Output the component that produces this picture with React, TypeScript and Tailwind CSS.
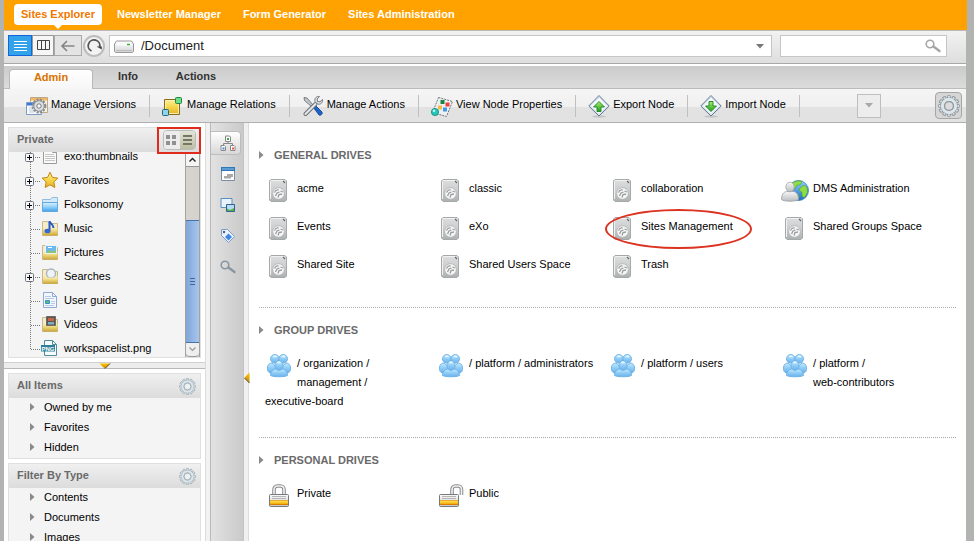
import React from "react";

type Kids = { children: React.ReactNode };

/* Shared gradients used by the icon drawings */
function Gradients() {
  const g = (id: string, stops: string[]) => (
    <linearGradient id={id} x1="0" y1="0" x2="0" y2="1">
      {stops.map((c, i) => (
        <stop key={i} offset={i / (stops.length - 1)} stopColor={c} />
      ))}
    </linearGradient>
  );
  return (
    <svg className="absolute h-0 w-0" aria-hidden="true">
      <defs>
        {g("steel", ["#dedfdf", "#cbcdce", "#adb0b1"])}
        {g("blue", ["#c4ecff", "#8fccf7", "#6ab2ec"])}
        {g("folder", ["#dff0ff", "#8fd0f8", "#3f9fe8"])}
        {g("gold", ["#fff2a0", "#f6d64a", "#e3b02a"])}
        {g("sand", ["#f8eebb", "#e8cf6c", "#caa53c"])}
        {g("white", ["#ffffff", "#d2d4d6"])}
        {g("person", ["#f7f7f7", "#b9bcbf"])}
        {g("globe", ["#8fd0ff", "#1b6fc4"])}
        {g("green", ["#a5f06a", "#1f9e1f"])}
        {g("lockBody", ["#fafafa", "#c9c9c9"])}
        {g("lockGold", ["#ffe14a", "#f0a000"])}
        {g("orange", ["#ffc400", "#c88a00"])}
      </defs>
    </svg>
  );
}

function Icon({ w, h, top = 0, children }: Kids & { w: number; h: number; top?: number }) {
  return (
    <svg width={w} height={h} viewBox={`0 ${top} ${w} ${h}`} fill="none" className="block shrink-0 overflow-visible" aria-hidden="true">
      {children}
    </svg>
  );
}

/* ---------- toolbar icons, 22 x 24 ---------- */

const gearTeeth = (
  <>
    <circle cx="13" cy="12" r="6.200" stroke="#8b8f93" strokeWidth="2.500" strokeDasharray="2.200 1.050" />
    <circle cx="13" cy="12" r="5.200" fill="#dcdfe1" stroke="#94989c" />
    <circle cx="13" cy="12" r="2.200" fill="#f8f8f8" stroke="#777b80" />
  </>
);

const VersionsIcon = () => (
  <Icon w={22} h={24}>
    <path d="M4.500 3.500h17v15h-17z" fill="#fdf6e2" stroke="#b9a98a" />
    <path d="M5 4h16v2.500H5z" fill="#f9b65c" />
    <path d="M.5 8.500h15v12H.5z" fill="#f6f9fd" stroke="#7f9cc4" />
    <path d="M1 9h14v2.500H1z" fill="#3d78dc" />
    <path d="M3 14h4M3 16h4M3 18h5" stroke="#c5ccd6" />
    {gearTeeth}
  </Icon>
);

const RelationsIcon = () => (
  <Icon w={22} h={24}>
    <path d="M2.500 5.500h15v15h-15z" fill="url(#gold)" stroke="#8b6b1b" />
    <path d="M3.500 6.500h13v13h-13z" stroke="#fbeeb0" />
    <rect x="13.500" y="3.500" width="6" height="6" rx="1" fill="#6fdc8c" stroke="#23863e" />
    <rect x=".5" y="15.500" width="6" height="6" rx="1" fill="#8fd3ea" stroke="#1f6684" />
  </Icon>
);

const ActionsIcon = () => (
  <Icon w={22} h={24}>
    <path d="M2 3.500l3 .5 6 7-1.500 1.500-7-6z" fill="#c4c8cc" stroke="#5c6268" strokeWidth=".8" />
    <path d="M11 13l2-2 7 7c1 1.500-1 4-3 3z" fill="#1e62c8" stroke="#0c3f8e" strokeWidth=".8" />
    <path d="M3.500 20l10-10" stroke="#676d73" strokeWidth="4" strokeLinecap="round" />
    <path d="M3.500 20l10-10" stroke="#e4e7ea" strokeWidth="2.200" strokeLinecap="round" />
    <path d="M17.500 2.500c-3-.5-5.500 2-4.500 5l2.500 2.500c3 1 5.500-1.500 5-4.500l-2.500 2.300-2.500-.3-.3-2.500z" fill="#dfe2e5" stroke="#676d73" strokeWidth=".9" />
  </Icon>
);

const PropertiesIcon = () => (
  <Icon w={22} h={24}>
    <path d="M7.500 3.500l14 4-6 15-14-4z" fill="#eff0f2" stroke="#6d747b" strokeDasharray="2 1" />
    <path d="M9.500 6h4v4h-4z" fill="#15873c" />
    <path d="M14.500 8.500h4v4h-4z" fill="#ee4040" />
    <path d="M7 11.500h4v4H7z" fill="#f6b94c" />
    <path d="M12 13.500h4v4h-4z" fill="#3c9bea" />
    <circle cx="4" cy="18" r="3.600" fill="#27c7bb" stroke="#0c837d" strokeWidth=".8" />
    <circle cx="3" cy="16.800" r="1.200" fill="#c7fbf5" />
  </Icon>
);

function TransferIcon({ down }: { down?: boolean }) {
  return (
    <Icon w={22} h={24}>
      <ellipse cx="11" cy="22.500" rx="7" ry="1.200" fill="#c4c4c4" />
      <path d="M11 1.500L21.200 12 11 22 .8 12z" fill="#f7fafc" stroke="#5e7795" />
      <path d="M11 3L19.700 12 11 20.500 2.300 12z" stroke="#c7d5e4" />
      {down ? (
        <path d="M9 7.500h4V12h3.500L11 17.500 5.500 12H9z" fill="url(#green)" stroke="#2a8a2a" />
      ) : (
        <path d="M9 17.500h4V13h3.500L11 7.500 5.500 13H9z" fill="url(#green)" stroke="#2a8a2a" />
      )}
    </Icon>
  );
}

const gearSpokes = Array.from({ length: 12 }, (_, i) => i * 30);

function GearIcon({ size, dark }: { size: number; dark?: boolean }) {
  const edge = dark ? "#8d979d" : "#9dacb6";
  return (
    <svg width={size} height={size} viewBox="0 0 20 20" fill="none" aria-hidden="true" className="block">
      {gearSpokes.map((a) => (
        <rect key={a} x="8.600" y=".5" width="2.800" height="4" rx=".8" fill="#d8e0e4" stroke={edge} strokeWidth=".9" transform={`rotate(${a} 10 10)`} />
      ))}
      <circle cx="10" cy="10" r="6" stroke={edge} strokeWidth="3.600" />
      <circle cx="10" cy="10" r="6" stroke="#dbe5ea" strokeWidth="2.800" />
      <circle cx="10" cy="10" r="4" fill={dark ? "#dcdcdc" : "#eef1f2"} stroke={edge} strokeWidth="1.100" />
    </svg>
  );
}

const Magnifier = ({ color }: { color: string }) => (
  <Icon w={16} h={14}>
    <circle cx="5" cy="5" r="3.800" stroke={color} strokeWidth="1.600" />
    <path d="M8.500 7.500l6 4.500" stroke={color} strokeWidth="2.400" strokeLinecap="round" />
  </Icon>
);

const Caret = ({ color }: { color: string }) => (
  <Icon w={8} h={5}>
    <path d="M0 0h8L4 4.500z" fill={color} />
  </Icon>
);

const RightMark = () => (
  <Icon w={5} h={8}>
    <path d="M0 0l4.500 4L0 8z" fill="#8a8a8a" />
  </Icon>
);

/* ---------- drive icons, 28 x 24 ---------- */

const DriveIcon = () => (
  <Icon w={28} h={24} top={1}>
    <path d="M6 1.500h14l1.500 1.500v19L20 23.500H6L4.500 22V3z" fill="url(#steel)" stroke="#a6a9aa" />
    <path d="M5.500 21V3.500L6.500 2.500h12" stroke="#f1f1f1" />
    <path d="M18 3l2 2" stroke="#666" strokeWidth="1.100" />
    <circle cx="13.500" cy="15.500" r="5.800" fill="#f6f6f6" stroke="#b0b2b3" strokeWidth=".8" />
    <path d="M9.500 14.500c1-2 3-2.800 4.200-2.300M10.500 18l1.500-3 2.500-1M13 19.500l1-3 3-.5M15.500 13l2.500 1" stroke="#9a9d9e" strokeWidth="1.300" />
  </Icon>
);

const GroupIcon = () => (
  <Icon w={28} h={24} top={1}>
    <g fill="url(#blue)" stroke="#6aafe4" strokeWidth=".9">
      <path d="M2.500 16.500c-.5-4 1.500-6.500 4.500-6.500l4.500 4-4 6c-3 0-4.500-.5-5-3.500zM25.500 16.500c.5-4-1.500-6.500-4.500-6.500l-4.500 4 4 6c3 0 4.500-.5 5-3.500z" />
      <circle cx="9.800" cy="5.800" r="4.300" />
      <circle cx="18.200" cy="5.800" r="4.300" />
      <path d="M5.500 22.500c0-3.500 2-6 5-6.500h7c3 .5 5 3 5 6.500-3 1.700-14 1.700-17 0z" />
      <ellipse cx="14" cy="12.500" rx="4" ry="4.800" />
    </g>
    <path d="M8.500 4c1-1 2-1 3 0M17 4c1-1 2-1 3 0M12.500 10c1-1 2-1 3 0" stroke="#e9f8ff" strokeWidth="1.200" />
  </Icon>
);

const AdminIcon = () => (
  <Icon w={28} h={24} top={1}>
    <circle cx="17.500" cy="12.500" r="10" fill="url(#globe)" stroke="#3b7fb8" strokeWidth=".8" />
    <path d="M11 5.500c3-3 8-3 10-2l-1.500 3-4 1-1 3-3-1zM19 10l4-3 3 2.500.5 5-3 5-2.500-1v-4l-3-2.500zM13 15l4 1 1 3-2 3-3-1z" fill="#8fdc45" stroke="#4b9e2a" strokeWidth=".6" />
    <path d="M.5 21.500c0-5 2-7.500 5-8h7c3 .5 5 3 5 8-2 2.300-15 2.300-17 0z" fill="url(#person)" stroke="#9b9ea1" strokeWidth=".8" />
    <ellipse cx="9" cy="9" rx="4.200" ry="4.800" fill="url(#person)" stroke="#a4a7aa" strokeWidth=".8" />
  </Icon>
);

function LockIcon({ open }: { open?: boolean }) {
  const shackle = open
    ? "M15 12V6.500C15 4.500 16.500 3 18.500 3H21c2 0 3.500 1.500 3.500 3.500V12"
    : "M9 12V6.500C9 4.500 10.500 3 12.500 3h3C17.500 3 19 4.500 19 6.500V12";
  return (
    <Icon w={28} h={24} top={1}>
      <path d={shackle} stroke="#8a8c8f" strokeWidth="3.600" />
      <path d={shackle} stroke="#f0f0f0" strokeWidth="1.600" />
      <g transform={open ? "translate(-2 0)" : undefined}>
        <rect x="4.500" y="11.500" width="19" height="12" rx="1" fill="url(#lockBody)" stroke="#77797c" />
        <path d="M7 13.500h14M7 15.500h14" stroke="#b5b5b5" />
        <path d="M5 18h18v3.500H5z" fill="url(#lockGold)" />
        <path d="M5 21.500h18" stroke="#d97d00" />
        <path d="M5 17.500h18" stroke="#e8a93a" />
      </g>
    </Icon>
  );
}

/* ---------- tree icons, 18 x 18 ---------- */

const PageIcon = () => (
  <Icon w={18} h={18}>
    <path d="M2.500 1.500h9l4 4v11h-13z" fill="#fafafa" stroke="#9b9b9b" />
    <path d="M11.500 1.500v4h4" stroke="#9b9b9b" />
    <path d="M4 7.500h9M4 9.500h10M4 11.500h10M4 13.500h10" stroke="#c6c6c6" />
  </Icon>
);
const StarIcon = () => (
  <Icon w={18} h={18}>
    <path d="M9 1.200l2.400 5.200 5.400.7-4 3.800 1 5.600L9 13.800l-4.800 2.700 1-5.600-4-3.800 5.400-.7z" fill="url(#gold)" stroke="#c4860c" />
  </Icon>
);
const FolderIcon = () => (
  <Icon w={18} h={18}>
    <path d="M1.500 15.500V4.500h8l1.500-2h5.500v13z" fill="#d3eafa" stroke="#8fbcdf" />
    <path d="M1.500 7.500h15v9h-15z" fill="url(#folder)" stroke="#5fa8e0" />
  </Icon>
);
function MediaFolder({ children }: Kids) {
  return (
    <Icon w={18} h={18}>
      <path d="M1.500 2.500h5l1.500 2h8.500v12h-15z" fill="#f4ecc8" stroke="#c8b987" />
      <path d="M2 9h14.500v7.500H2z" fill="url(#sand)" />
      {children}
    </Icon>
  );
}
const MusicIcon = () => (
  <MediaFolder>
    <path d="M8.500 2v9.500M8.500 2.500c1 2 4 3 4 6.500" stroke="#2a58c8" strokeWidth="2" />
    <ellipse cx="6.500" cy="12" rx="3" ry="2.300" fill="#3567da" />
  </MediaFolder>
);
const PictureIcon = () => (
  <MediaFolder>
    <path d="M4.500 2.500h11v8h-11z" fill="#6cb9f2" stroke="#e8f4fb" />
    <path d="M5 10l3-3 3 1.500 4-1V10z" fill="#8fc36a" />
    <path d="M7 4.500h4" stroke="#fff" />
  </MediaFolder>
);
const SearchFolderIcon = () => (
  <MediaFolder>
    <circle cx="10" cy="6.500" r="4.500" fill="#eef3f8" stroke="#a7b1bd" strokeWidth="1.300" />
    <path d="M2 10.500h14.500v6H2z" fill="url(#sand)" />
  </MediaFolder>
);
const GuideIcon = () => (
  <Icon w={18} h={18}>
    <path d="M2.500 1.500h9l4 4v11h-13z" fill="#f2f7fd" stroke="#8fa9d2" />
    <path d="M11.500 1.500v4h4" stroke="#8fa9d2" />
    <path d="M4 5.500h6M4 7.500h9M10 10.500h4M10 12.500h4M4 14.500h9" stroke="#b5c9e8" />
    <path d="M4.500 9.500h4v3h-4z" fill="#58c46a" stroke="#3a8ed0" />
  </Icon>
);
const VideoIcon = () => (
  <MediaFolder>
    <path d="M5.500 1.500h9v9h-9z" fill="#5c564f" stroke="#6d6963" />
    <path d="M7 3h6v3H7z" fill="#c8624a" />
    <path d="M7 7h6v2.500H7z" fill="#7faec4" />
  </MediaFolder>
);
const PngIcon = () => (
  <Icon w={18} h={18}>
    <path d="M3.500 1.500h8l4 4v11h-12z" fill="#f7fbfd" stroke="#4f8c9c" />
    <path d="M11.500 1.500v4h4" stroke="#4f8c9c" />
    <path d="M0 6h14v6.500H0z" fill="#2b8098" />
    <text x="7" y="11.500" fontSize="6" fontWeight="700" fill="#fff" textAnchor="middle" fontFamily="Liberation Sans, sans-serif">
      PNG
    </text>
  </Icon>
);

type Node = { label: string; icon: React.ReactNode; open?: boolean };

const tree: Node[] = [
  { label: "exo:thumbnails", icon: <PageIcon />, open: true },
  { label: "Favorites", icon: <StarIcon />, open: true },
  { label: "Folksonomy", icon: <FolderIcon />, open: true },
  { label: "Music", icon: <MusicIcon /> },
  { label: "Pictures", icon: <PictureIcon /> },
  { label: "Searches", icon: <SearchFolderIcon />, open: true },
  { label: "User guide", icon: <GuideIcon /> },
  { label: "Videos", icon: <VideoIcon /> },
  { label: "workspacelist.png", icon: <PngIcon /> },
];

function TreeRow({ node, last }: { node: Node; last: boolean }) {
  return (
    <li className="flex h-6 items-center">
      <Icon w={32} h={24}>
        <path d={last ? "M21.500 0v13" : "M21.500 0v24"} stroke="#777" strokeDasharray="1 1" />
        <path d="M22 13.500h10" stroke="#777" strokeDasharray="1 1" />
        {node.open && (
          <>
            <rect x="16.500" y="9.500" width="8" height="8" rx="1" fill="#f6f6f6" stroke="#6e7480" />
            <path d="M18 13.500h5M20.500 11v5" stroke="#000" />
          </>
        )}
      </Icon>
      {node.icon}
      <a href="#" className="ml-[5px] whitespace-nowrap">{node.label}</a>
    </li>
  );
}

function PanelHeader({ title, children }: Kids & { title: string }) {
  return (
    <div className="flex h-6 items-center justify-between bg-linear-to-b from-[#f0f0f0] to-[#dcdcdc] pr-1 pl-2">
      <h2 className="pb-0.5 font-bold text-[#6a6a6a]">{title}</h2>
      {children}
    </div>
  );
}

function FilterPanel({ title, items }: { title: string; items: string[] }) {
  return (
    <section className="border border-[#e0e0e0] bg-[#f4f4f4]">
      <PanelHeader title={title}>
        <button type="button" aria-label={`${title} settings`}>
          <GearIcon size={17} />
        </button>
      </PanelHeader>
      <ul>
        {items.map((t) => (
          <li key={t} className="flex h-5 items-center gap-[9px] pb-0.5 pl-[21px]">
            <RightMark />
            <a href="#">{t}</a>
          </li>
        ))}
      </ul>
    </section>
  );
}

const tools = [
  { label: "Manage Versions", icon: <VersionsIcon /> },
  { label: "Manage Relations", icon: <RelationsIcon /> },
  { label: "Manage Actions", icon: <ActionsIcon /> },
  { label: "View Node Properties", icon: <PropertiesIcon /> },
  { label: "Export Node", icon: <TransferIcon /> },
  { label: "Import Node", icon: <TransferIcon down /> },
];

const TreeViewIcon = () => (
  <Icon w={16} h={16}>
    <path d="M8 5v4M3.500 11V8.500h9V11" stroke="#888" />
    <path d="M5.500 1h4l1 1v4.500h-5z" fill="#fff" stroke="#888" />
    <path d="M7 4h2" stroke="#2fae3c" strokeWidth="2" />
    <path d="M1 10.500h3.500l1 1v4H1zM10.500 10.500H14l1 1v4h-4.500z" fill="#fff" stroke="#888" />
    <path d="M2.500 13.500h2" stroke="#3b86dc" strokeWidth="2" />
    <path d="M12 13.500h2" stroke="#ee5a33" strokeWidth="2" />
  </Icon>
);
const WindowIcon = () => (
  <Icon w={16} h={16}>
    <path d="M1.500 1.500h13v13h-13z" fill="#fff" stroke="#7a8ea8" />
    <path d="M1 1h14v4H1z" fill="#2f77b8" />
    <path d="M2 3h12" stroke="#8cc4ee" />
    <path d="M7 8h6v3H7zM4 10h7v2.500H4z" fill="#a9a9a9" />
  </Icon>
);
const LayersIcon = () => (
  <Icon w={16} h={16}>
    <path d="M1 1.500h11v9H1z" fill="#e8f2fb" stroke="#5b8fbe" />
    <path d="M6.500 7.500h8v7h-8z" fill="#b5dcf6" stroke="#35618e" />
    <path d="M7 11.500l3 1.500 4-2v3H7z" fill="#57b04a" />
  </Icon>
);
const TagIcon = () => (
  <Icon w={16} h={16}>
    <path d="M1.500 1.500h6l7 7-6 6-7-7z" fill="#eaf3fd" stroke="#7d9cc8" />
    <path d="M8.500 5.500l3.500 3.500-3.500 3.500L5 9z" fill="#3f86e0" />
    <circle cx="4" cy="4" r="1.200" fill="#4a5c78" />
  </Icon>
);

const sideTabs = [
  { label: "File explorer", icon: <TreeViewIcon /> },
  { label: "Views", icon: <WindowIcon /> },
  { label: "Relations", icon: <LayersIcon /> },
  { label: "Tags", icon: <TagIcon /> },
  { label: "Saved searches", icon: <Magnifier color="#8a96a0" /> },
];

type Drive = { label: string; icon?: React.ReactNode; marked?: boolean };

/* Lets a path break only at its spaces, never at a hyphen */
function DriveLabel({ text }: { text: string }) {
  return text.split(" ").map((word, i) => (
    <React.Fragment key={i}>
      {i > 0 && " "}
      <span className="whitespace-nowrap">{word}</span>
    </React.Fragment>
  ));
}

function DriveSection({ title, drives, gap }: { title: string; drives: Drive[]; gap: string }) {
  return (
    <section className={`border-b border-dotted border-[#aaa] last:border-0 ${gap}`}>
      <div className="flex h-[46px] items-center gap-2.5 pb-[3px]">
        <RightMark />
        <h2 className="font-bold text-[#6a6a6a]">{title}</h2>
      </div>
      <ul className="grid grid-cols-[repeat(auto-fill,172px)]">
        {drives.map((d) => (
          <li key={d.label} className="relative px-1.5">
            <div className="float-left h-[38px] w-8">{d.icon ?? <DriveIcon />}</div>
            <a href="#" className="leading-[19px]">
              <DriveLabel text={d.label} />
            </a>
            {d.marked && (
              <span className="pointer-events-none absolute -top-2 left-0.5 h-10 w-[147px] rounded-[50%] border-2 border-[#dc3220]" />
            )}
          </li>
        ))}
      </ul>
    </section>
  );
}

const general: Drive[] = [
  { label: "acme" },
  { label: "classic" },
  { label: "collaboration" },
  { label: "DMS Administration", icon: <AdminIcon /> },
  { label: "Events" },
  { label: "eXo" },
  { label: "Sites Management", marked: true },
  { label: "Shared Groups Space" },
  { label: "Shared Site" },
  { label: "Shared Users Space" },
  { label: "Trash" },
];
const groups: Drive[] = [
  "/ organization / management / executive-board",
  "/ platform / administrators",
  "/ platform / users",
  "/ platform / web-contributors",
].map((label) => ({ label, icon: <GroupIcon /> }));
const personal: Drive[] = [
  { label: "Private", icon: <LockIcon /> },
  { label: "Public", icon: <LockIcon open /> },
];

const TopNav = () => (
  <nav className="-mr-px flex h-[30px] shrink-0 items-start gap-2 bg-[#ffa200] pt-1 pl-2.5 font-bold text-white">
    <a href="#" className="relative h-[21px] rounded bg-white px-[7px] leading-[21px] text-[#f07800]">
      Sites Explorer
      <span className="absolute top-full left-1/2 -ml-1 h-0 w-0 border-x-4 border-t-4 border-x-transparent border-t-white" />
    </a>
    <a href="#" className="px-[7px] leading-[21px]">Newsletter Manager</a>
    <a href="#" className="px-[7px] leading-[21px]">Form Generator</a>
    <a href="#" className="px-[7px] leading-[21px]">Sites Administration</a>
  </nav>
);

const AddressBar = () => (
  <div className="flex h-[34px] shrink-0 items-start border-y border-t-[#b8b8b8] border-b-[#a8a8a8] bg-linear-to-b from-[#f2f2f2] to-[#dedede] pt-1 pr-[19px] pl-1">
    <button type="button" aria-label="List view" className="flex h-[21px] w-6 items-center justify-center border border-[#1465d8] bg-[#32a2ea]">
      <Icon w={13} h={12}>
        <path d="M0 1.500h13M0 4.500h13M0 7.500h13M0 10.500h13" stroke="#fff" />
      </Icon>
    </button>
    <button type="button" aria-label="Column view" className="flex h-[21px] w-[22px] items-center justify-center border border-[#999] bg-[#f6f6f6]">
      <Icon w={13} h={11}>
        <path d="M.5.5h12v9H.5zM4.500.5v9M8.500.5v9" stroke="#444" />
      </Icon>
    </button>
    <button type="button" aria-label="Back" className="flex h-[21px] w-7 items-center justify-center border border-[#aaa] bg-[#e4e4e4]">
      <Icon w={14} h={12}>
        <path d="M1 6h12.500M6 1L1 6l5 5" stroke="#858585" strokeWidth="1.600" />
      </Icon>
    </button>
    <button type="button" aria-label="Refresh" className="ml-px flex h-[22px] w-[22px] items-center justify-center rounded-full border-2 border-[#bdbdbd] bg-[#f3f3f3]">
      <Icon w={16} h={16}>
        <path d="M5.500 13A5.800 5.800 0 1 1 13.700 9" stroke="#555" strokeWidth="1.800" />
        <path d="M10.500 8.500h5.300v3z" fill="#444" />
      </Icon>
    </button>
    <div className="ml-1 flex h-[22px] grow items-center border border-[#c6c6c6] bg-white pr-[7px] pl-1">
      <Icon w={20} h={13}>
        <path d="M2.500 1h15l2 3v7.500l-1 1H1.500l-1-1V4z" fill="url(#white)" stroke="#999" />
        <path d="M4 2.500h12l1.500 3h-15z" fill="#fafafa" />
        <path d="M13 4.500h3" stroke="#3db23d" strokeWidth="1.500" />
        <path d="M2 10.500h16" stroke="#bbb" />
      </Icon>
      <input aria-label="Address" defaultValue="/Document" className="ml-[7px] h-5 min-w-0 grow pb-0.5 text-[13px] text-[#222] outline-none" />
      <button type="button" aria-label="Show history"><Caret color="#777" /></button>
    </div>
    <div className="ml-2 flex h-[22px] w-[167px] items-center border border-[#c6c6c6] bg-white pr-[5px] pl-1">
      <input aria-label="Search" className="h-5 min-w-0 grow outline-none" />
      <button type="button" aria-label="Run search"><Magnifier color="#a6a6a6" /></button>
    </div>
  </div>
);

const Tabs = () => (
  <div className="flex h-[23px] shrink-0 items-end border-b border-[#bcbcbc] bg-linear-to-b from-[#cbcbcb] to-[#dcdcdc] pl-[5px] font-bold text-[#333]">
    <button type="button" className="-mb-px h-5 w-[84px] rounded-t border border-b-0 border-[#b8b8b8] bg-linear-to-b from-white to-[#f6f6f6] pb-1.5 text-[#d87400]">Admin</button>
    <button type="button" className="ml-1.5 h-5 w-[58px] pb-1">Info</button>
    <button type="button" className="h-5 w-[78px] pb-1">Actions</button>
  </div>
);

const Toolbar = () => (
  <div className="flex h-[34px] shrink-0 items-center border-b border-[#b0b0b0] bg-linear-to-b from-[#f5f5f5] from-0% via-[#f0f0f0] via-56% to-[#e2e2e2] to-56% pr-1 pl-[10px]">
    {tools.map((t) => (
      <div key={t.label} className="flex h-[22px] items-center border-r border-[#c0c0c0] pr-[13px] pl-3">
        <button type="button" className="flex items-center gap-[3px] whitespace-nowrap">
          {t.icon}
          <span className="pb-1">{t.label}</span>
        </button>
      </div>
    ))}
    <div className="grow" />
    <button type="button" aria-label="More actions" className="mr-[54px] flex h-6 w-6 shrink-0 items-center justify-center border border-[#bebebe] bg-[#ededed]">
      <Caret color="#a8a8a8" />
    </button>
    <button type="button" aria-label="Preferences" className="flex h-[27px] w-[27px] shrink-0 items-center justify-center rounded border border-[#a6a6a6] bg-[#d6d6d6]">
      <GearIcon size={22} dark />
    </button>
  </div>
);

const ScrollBar = () => (
  <div className="flex h-full w-[15px] shrink-0 flex-col border-x border-[#a5a29c] bg-[#d6d2cd]">
    <button type="button" aria-label="Scroll up" className="flex h-[15px] items-center justify-center border-b border-[#999] bg-[#f5f5f5]">
      <Icon w={7} h={5}><path d="M.5 4.500l3-3 3 3" stroke="#222" strokeWidth="1.400" /></Icon>
    </button>
    <div className="h-[53px]" />
    <div className="flex grow items-center justify-center border-y border-[#4672ae] bg-linear-to-r from-[#7ea6d8] to-[#a8c6ee]">
      <Icon w={5} h={7}><path d="M0 .5h5M0 3.500h5M0 6.500h5" stroke="#3f659b" /></Icon>
    </div>
    <button type="button" aria-label="Scroll down" className="flex h-[14px] items-center justify-center rounded-b border-b border-[#999] bg-[#efefef]">
      <Icon w={7} h={5}><path d="M.5.5l3 3 3-3" stroke="#999" strokeWidth="1.200" /></Icon>
    </button>
  </div>
);

const Sidebar = () => (
  <aside className="w-[201px] shrink-0 overflow-hidden">
    <section className="mx-1 mt-1 border border-[#e0e0e0] bg-[#f4f4f4]">
      <div className="relative">
        <PanelHeader title="Private">
          <div className="mb-px flex h-5 w-[33px] overflow-hidden rounded border border-[#bbb]">
            <button type="button" aria-label="Icons" className="flex flex-1 items-center justify-center bg-[#ececec]">
              <Icon w={11} h={10}><path d="M0 0h4v4H0zM6 0h4v4H6zM0 6h4v4H0zM6 6h4v4H6z" fill="#909090" /></Icon>
            </button>
            <button type="button" aria-label="List" className="flex flex-1 items-center justify-center bg-linear-to-b from-[#e4e4d8] to-[#bdbda2]">
              <Icon w={9} h={10}><path d="M0 1h9M0 5h9M0 9h9" stroke="#777766" strokeWidth="2" /></Icon>
            </button>
          </div>
        </PanelHeader>
        <span className="pointer-events-none absolute -top-px -right-px h-[27px] w-11 border-2 border-[#e02a1c]" />
      </div>
      <div className="flex h-[205px] overflow-hidden">
        <ul className="-mt-2 min-w-0 grow">
          {tree.map((n, i) => (
            <TreeRow key={n.label} node={n} last={i === tree.length - 1} />
          ))}
        </ul>
        <ScrollBar />
      </div>
    </section>
    <div className="mt-1 flex h-[7px] items-start justify-center border-y border-t-[#d0d0d0] border-b-[#b8b8b8] bg-[#ededed]">
      <Icon w={12} h={6}><path d="M.5.5h10l-5 5z" fill="url(#orange)" /><path d="M11 .5l-5 5" stroke="#443000" /></Icon>
    </div>
    <div className="flex flex-col gap-1 px-1 pt-1">
      <FilterPanel title="All Items" items={["Owned by me", "Favorites", "Hidden"]} />
      <FilterPanel title="Filter By Type" items={["Contents", "Documents", "Images"]} />
    </div>
  </aside>
);

export default function App() {
  return (
    <div className="h-screen overflow-hidden bg-[#b2b4b2] pr-2 pl-1 font-['Liberation_Sans',Arial,sans-serif] text-[11px] leading-[14px] text-black">
      <Gradients />
      <div className="flex h-full flex-col bg-white">
        <TopNav />
        <AddressBar />
        <div className="h-0.5 shrink-0 bg-white" />
        <Tabs />
        <Toolbar />
        <div className="flex min-h-0 grow">
          <Sidebar />
          <div className="w-1.5 shrink-0 border-x border-l-[#dcdcdc] border-r-[#b8b8b8] bg-[#f2f2f2]" />
          <div className="flex w-8 shrink-0 flex-col gap-[7px] bg-linear-to-r from-[#e2e2e2] to-[#cacaca] pt-2">
            {sideTabs.map((t, i) => (
              <button
                key={t.label}
                type="button"
                aria-label={t.label}
                className={`mr-0.5 flex h-6 items-center justify-center pl-1 ${i === 0 ? "rounded-r border border-l-0 border-[#bdbdbd] bg-linear-to-b from-white to-[#d8d8d8]" : ""}`}
              >
                {t.icon}
              </button>
            ))}
          </div>
          <div className="w-1.5 shrink-0 border-x border-l-[#c4c4c4] border-r-[#dcdcdc] bg-[#f0f0f0] pt-[249px]">
            <Icon w={6} h={12}>
              <path d="M5.500.5v10L.5 5.500z" fill="url(#orange)" />
              <path d="M.5 6l5 5" stroke="#443000" />
            </Icon>
          </div>
          <main className="min-w-0 grow overflow-hidden px-2.5 pt-2.5">
            <DriveSection title="GENERAL DRIVES" drives={general} gap="pb-[14px]" />
            <DriveSection title="GROUP DRIVES" drives={groups} gap="pb-[26px]" />
            <DriveSection title="PERSONAL DRIVES" drives={personal} gap="" />
          </main>
        </div>
      </div>
    </div>
  );
}
